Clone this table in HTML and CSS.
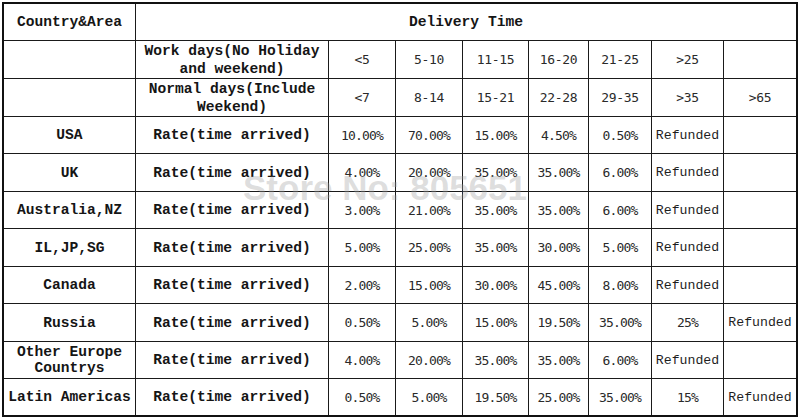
FILE: index.html
```html
<!DOCTYPE html>
<html>
<head>
<meta charset="utf-8">
<link rel="stylesheet" href="styles.css">
</head>
<body>
<div class="sheet">
  <div class="grid">
    <div class="cell lbl">Country&amp;Area</div>
    <div class="cell lbl span8">Delivery Time</div>

    <div class="cell"></div>
    <div class="cell lbl two">Work days(No Holiday<br>and weekend)</div>
    <div class="cell rng">&lt;5</div>
    <div class="cell rng">5-10</div>
    <div class="cell rng">11-15</div>
    <div class="cell rng">16-20</div>
    <div class="cell rng">21-25</div>
    <div class="cell rng">&gt;25</div>
    <div class="cell"></div>

    <div class="cell"></div>
    <div class="cell lbl two">Normal days(Include<br>Weekend)</div>
    <div class="cell rng">&lt;7</div>
    <div class="cell rng">8-14</div>
    <div class="cell rng">15-21</div>
    <div class="cell rng">22-28</div>
    <div class="cell rng">29-35</div>
    <div class="cell rng">&gt;35</div>
    <div class="cell rng">&gt;65</div>

    <div class="cell lbl">USA</div>
    <div class="cell lbl">Rate(time arrived)</div>
    <div class="cell num">10.00%</div>
    <div class="cell num">70.00%</div>
    <div class="cell num">15.00%</div>
    <div class="cell num">4.50%</div>
    <div class="cell num">0.50%</div>
    <div class="cell ref">Refunded</div>
    <div class="cell"></div>

    <div class="cell lbl">UK</div>
    <div class="cell lbl">Rate(time arrived)</div>
    <div class="cell num">4.00%</div>
    <div class="cell num">20.00%</div>
    <div class="cell num">35.00%</div>
    <div class="cell num">35.00%</div>
    <div class="cell num">6.00%</div>
    <div class="cell ref">Refunded</div>
    <div class="cell"></div>

    <div class="cell lbl">Australia,NZ</div>
    <div class="cell lbl">Rate(time arrived)</div>
    <div class="cell num">3.00%</div>
    <div class="cell num">21.00%</div>
    <div class="cell num">35.00%</div>
    <div class="cell num">35.00%</div>
    <div class="cell num">6.00%</div>
    <div class="cell ref">Refunded</div>
    <div class="cell"></div>

    <div class="cell lbl">IL,JP,SG</div>
    <div class="cell lbl">Rate(time arrived)</div>
    <div class="cell num">5.00%</div>
    <div class="cell num">25.00%</div>
    <div class="cell num">35.00%</div>
    <div class="cell num">30.00%</div>
    <div class="cell num">5.00%</div>
    <div class="cell ref">Refunded</div>
    <div class="cell"></div>

    <div class="cell lbl">Canada</div>
    <div class="cell lbl">Rate(time arrived)</div>
    <div class="cell num">2.00%</div>
    <div class="cell num">15.00%</div>
    <div class="cell num">30.00%</div>
    <div class="cell num">45.00%</div>
    <div class="cell num">8.00%</div>
    <div class="cell ref">Refunded</div>
    <div class="cell"></div>

    <div class="cell lbl">Russia</div>
    <div class="cell lbl">Rate(time arrived)</div>
    <div class="cell num">0.50%</div>
    <div class="cell num">5.00%</div>
    <div class="cell num">15.00%</div>
    <div class="cell num">19.50%</div>
    <div class="cell num">35.00%</div>
    <div class="cell num">25%</div>
    <div class="cell ref">Refunded</div>

    <div class="cell lbl tight">Other Europe<br>Countrys</div>
    <div class="cell lbl">Rate(time arrived)</div>
    <div class="cell num">4.00%</div>
    <div class="cell num">20.00%</div>
    <div class="cell num">35.00%</div>
    <div class="cell num">35.00%</div>
    <div class="cell num">6.00%</div>
    <div class="cell ref">Refunded</div>
    <div class="cell"></div>

    <div class="cell lbl">Latin Americas</div>
    <div class="cell lbl">Rate(time arrived)</div>
    <div class="cell num">0.50%</div>
    <div class="cell num">5.00%</div>
    <div class="cell num">19.50%</div>
    <div class="cell num">25.00%</div>
    <div class="cell num">35.00%</div>
    <div class="cell num">15%</div>
    <div class="cell ref">Refunded</div>
  </div>
  <div class="watermark">Store No: 805651</div>
</div>
</body>
</html>
```

FILE: styles.css
```css
html, body {
  margin: 0;
  padding: 0;
  background: #ffffff;
}

body {
  padding: 2px 0 0 2px;
}

.sheet {
  position: relative;
  width: max-content;
}

.grid {
  display: grid;
  grid-template-columns: 131px 192px 66px 66px 65px 59px 62px 71px 72px;
  grid-template-rows: 36px 37px 37px 36px 37px 36px 37px 36px 37px 36px 36px;
  gap: 1px;
  background: #1a1a1a;
  border: 2px solid #111111;
}

.cell {
  background: #ffffff;
  display: flex;
  align-items: center;
  justify-content: center;
  text-align: center;
  color: #151515;
  white-space: nowrap;
}

.span8 {
  grid-column: span 8;
}

.lbl {
  font-family: "Liberation Mono", "DejaVu Sans Mono", monospace;
  font-weight: bold;
  font-size: 14.6px;
  line-height: 18px;
}

.two {
  line-height: 18px;
}

.tight {
  line-height: 16px;
}

.rng {
  font-family: "DejaVu Sans Mono", "Liberation Mono", monospace;
  font-size: 13px;
  letter-spacing: -0.3px;
  color: #2a2a2a;
}

.num {
  font-family: "DejaVu Sans Mono", "Liberation Mono", monospace;
  font-size: 13px;
  letter-spacing: -0.8px;
  color: #2a2a2a;
}

.ref {
  font-family: "Liberation Mono", "DejaVu Sans Mono", monospace;
  font-size: 13.2px;
  color: #1e1e1e;
}

.watermark {
  position: absolute;
  left: 241px;
  top: 166px;
  font-family: "Liberation Sans", Arial, sans-serif;
  font-weight: bold;
  font-size: 35px;
  color: rgba(160, 160, 160, 0.35);
  white-space: nowrap;
  pointer-events: none;
}
```
